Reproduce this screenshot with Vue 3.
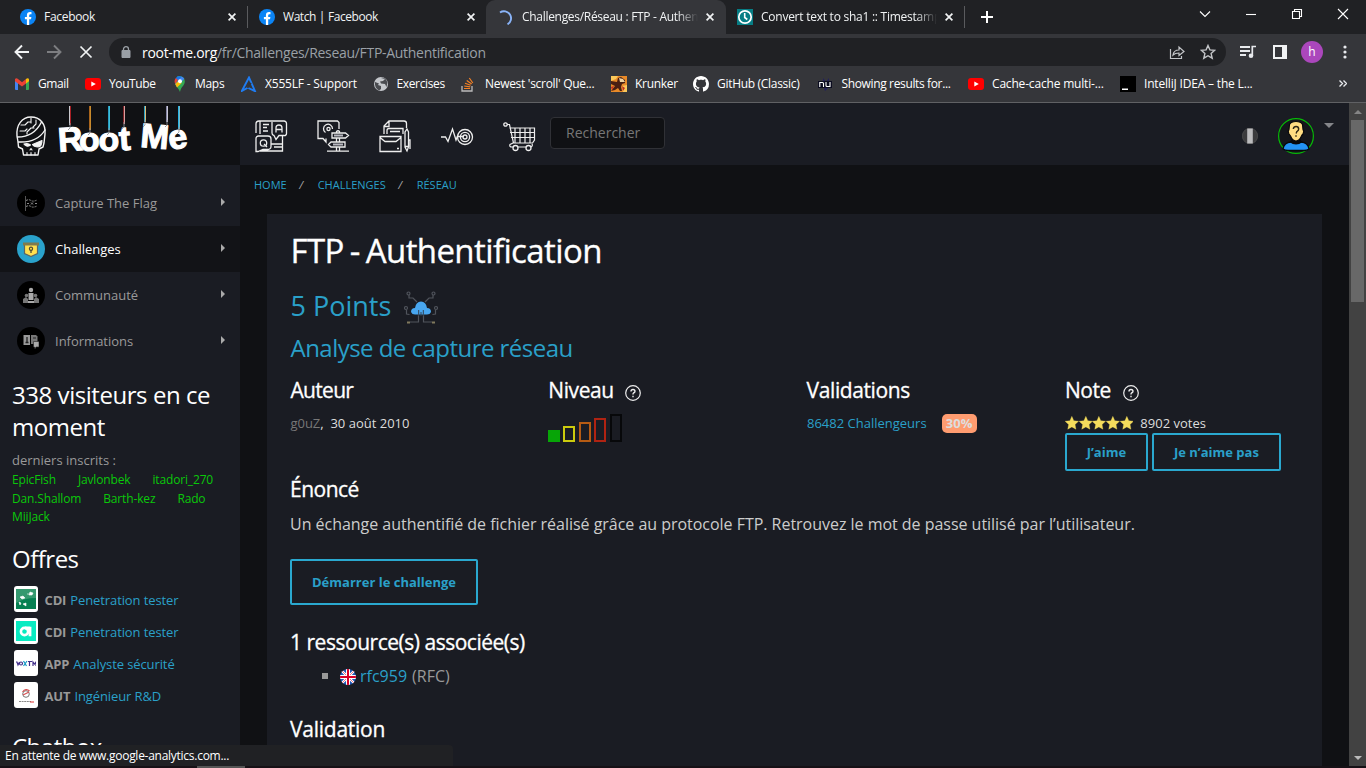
<script setup>
const tabs = [
  { id: 'fb1', title: 'Facebook', icon: 'fb' },
  { id: 'fb2', title: 'Watch | Facebook', icon: 'fb' },
  { id: 'rm', title: 'Challenges/Réseau : FTP - Authentification', icon: 'spin' },
  { id: 'sha', title: 'Convert text to sha1 :: Timestamp Converter', icon: 'clock' }
]
const bookmarks = [
  { t: 'Gmail', i: 'gmail' },
  { t: 'YouTube', i: 'yt' },
  { t: 'Maps', i: 'maps' },
  { t: 'X555LF - Support', i: 'asus' },
  { t: 'Exercises', i: 'globe' },
  { t: "Newest 'scroll' Que...", i: 'so' },
  { t: 'Krunker', i: 'krunker' },
  { t: 'GitHub (Classic)', i: 'github' },
  { t: 'Showing results for...', i: 'nu' },
  { t: 'Cache-cache multi-...', i: 'yt' },
  { t: 'IntelliJ IDEA – the L...', i: 'ij' }
]
const nav = [
  { t: 'Capture The Flag', i: 'flag' },
  { t: 'Challenges', i: 'chal', on: true },
  { t: 'Communauté', i: 'com' },
  { t: 'Informations', i: 'info' }
]
const offers = [
  { k: 'CDI', t: 'Penetration tester', i: 'bnp' },
  { k: 'CDI', t: 'Penetration tester', i: 'a' },
  { k: 'APP', t: 'Analyste sécurité', i: 'vox' },
  { k: 'AUT', t: 'Ingénieur R&D', i: 'red' }
]
const strings = [
  { x: 70, y: 22, a: '#c9c9cf', b: '#a81f24' },
  { x: 90, y: 27, a: '#a8641c', b: '#c98a2c' },
  { x: 109, y: 27, a: '#2a9cc4', b: '#3cc0d8' },
  { x: 124, y: 21, a: '#7c2226', b: '#d8a0a0' },
  { x: 145, y: 19, a: '#2aa0c4', b: '#d8b878' },
  { x: 167, y: 19, a: '#8484a4', b: '#c9c9d8' },
  { x: 179, y: 26, a: '#27b4e6', b: '#79b6c0' }
]
const star = 'M7 .2l2 4.400 4.900.6-3.600 3.300.9 4.900L7 11l-4.200 2.400.9-4.900L.1 5.200 5 4.600z'
</script>

<template>
  <div class="window">
    <div class="tabstrip">
      <div v-for="t in tabs" :key="t.id" class="tab" :class="'tab-' + t.id">
        <svg v-if="t.icon === 'fb'" class="fav" viewBox="0 0 16 16"><circle cx="8" cy="8" r="8" fill="#0b84f5" /><path d="M6.900 16V10.300H4.900V8h2V6.300c0-2.100 1.200-3.200 3.100-3.200.8 0 1.400.1 1.500.1v2h-1c-1 0-1.300.6-1.300 1.300V8h2.200l-.4 2.300H9.200V16z" fill="#fff" /></svg>
        <svg v-else-if="t.icon === 'spin'" class="fav" viewBox="0 0 16 16"><path d="M1 3.500A7 7 0 1 1 8.500 15.300" fill="none" stroke="#8ab4f8" stroke-width="1.900" /></svg>
        <svg v-else class="fav" viewBox="0 0 16 16"><path d="M0 0h16v16H0z" fill="#077d84" /><circle cx="8" cy="8" r="6.200" fill="none" stroke="#fff" stroke-width="1.700" /><path d="M7.700 4v4.500l2.600 2" fill="none" stroke="#fff" stroke-width="1.600" /></svg>
        <span class="tab-title">{{ t.title }}</span>
        <svg class="x" viewBox="0 0 8 8"><path d="M.6.6l6.800 6.800M7.400.6L.6 7.400" stroke="#f1f3f4" stroke-width="1.700" /></svg>
      </div>
      <svg class="plus" viewBox="0 0 12 12"><path d="M6 0v12M0 6h12" stroke="#fff" stroke-width="2" /></svg>
      <div class="winctl">
        <svg width="12" height="12" viewBox="0 0 12 12"><path d="M1 3.500l5 5 5-5" /></svg>
        <svg width="12" height="12" viewBox="0 0 12 12"><path d="M1 6.500h10" /></svg>
        <svg width="12" height="12" viewBox="0 0 12 12"><path d="M3.500 3.500v-2h7v7h-2M1.500 3.500h7v7h-7z" /></svg>
        <svg width="12" height="12" viewBox="0 0 12 12"><path d="M1 1l10 10M11 1L1 11" /></svg>
      </div>
    </div>

    <div class="toolbar">
      <svg class="tb-ic" viewBox="0 0 16 16"><path d="M15 8H2M8 1.500L1.500 8 8 14.500" fill="none" stroke="#f1f3f4" stroke-width="1.900" /></svg>
      <svg class="tb-ic" viewBox="0 0 16 16"><path d="M1 8h13M8 1.500L14.500 8 8 14.500" fill="none" stroke="#7d7e81" stroke-width="1.900" /></svg>
      <svg class="tb-ic" viewBox="0 0 16 16"><path d="M2.500 2.500l11 11M13.500 2.500l-11 11" fill="none" stroke="#f1f3f4" stroke-width="1.700" /></svg>
      <div class="omnibox">
        <svg width="10" height="12" viewBox="0 0 10 12"><path d="M1 4.500h8v7H1z" fill="#9aa0a6" stroke="#9aa0a6" /><path d="M2.500 5V3.200a2.500 2.500 0 0 1 5 0V5" fill="none" stroke="#9aa0a6" stroke-width="1.300" /></svg>
        <span class="url"><b>root-me.org</b>/fr/Challenges/Reseau/FTP-Authentification</span>
        <svg class="share" width="16" height="16" viewBox="0 0 16 16"><path d="M1.500 5v9.500h11V12M4 11c.5-3.500 2.500-5 6-5V3l5 4.500-5 4V9C7 9 5.500 9.500 4 11z" fill="none" stroke="#c3c5c8" stroke-width="1.200" /></svg>
        <svg width="16" height="16" viewBox="0 0 16 16"><path d="M8 1.500l1.900 4.400 4.800.4-3.600 3.200 1.100 4.700L8 11.700l-4.200 2.500 1.100-4.700L1.300 6.300l4.800-.4z" fill="none" stroke="#c3c5c8" stroke-width="1.400" /></svg>
      </div>
      <svg class="media" width="16" height="14" viewBox="0 0 16 14"><path d="M0 2h10M0 6h10M0 10h6" stroke="#e8eaed" stroke-width="1.800" /><path d="M12.300 10.500V1.500H16" fill="none" stroke="#e8eaed" stroke-width="1.700" /><circle cx="11" cy="10.800" r="2.300" fill="#e8eaed" /></svg>
      <svg class="panel" width="14" height="14" viewBox="0 0 14 14"><path d="M1 1h12v12H1z" fill="none" stroke="#f1f3f4" stroke-width="2" /><path d="M9 1h4v12H9z" fill="#f1f3f4" /></svg>
      <span class="profile">h</span>
      <svg class="dots" width="4" height="14" viewBox="0 0 4 14"><g fill="#e8eaed"><circle cx="2" cy="2" r="1.600" /><circle cx="2" cy="7" r="1.600" /><circle cx="2" cy="12" r="1.600" /></g></svg>
    </div>

    <div class="bookmarks">
      <div v-for="(b, n) in bookmarks" :key="n" class="bm">
        <svg class="fav" viewBox="0 0 16 16">
          <g v-if="b.i === 'gmail'"><path d="M1 3h3v11H2a1 1 0 0 1-1-1z" fill="#4285f4" /><path d="M12 3h3v10a1 1 0 0 1-1 1h-2z" fill="#34a853" /><path d="M1 3.200C1.500 2 3 2 4 3l4 3.200L12 3v4.500l-4 3-7-5.300z" fill="#ea4335" /><path d="M12 3c1.500-1.200 3-.7 3 1v1.300l-3 2.200z" fill="#fbbc04" /></g>
          <g v-else-if="b.i === 'yt'"><rect y="2" width="16" height="12" rx="3" fill="#f00" /><path d="M6.300 5.500v5L10.800 8z" fill="#fff" /></g>
          <g v-else-if="b.i === 'maps'"><path d="M5.500 0h2A5.300 5.300 0 0 1 12.800 5.500c0 4-3.800 5-4.800 10.500C7 12.500 4 11 3 8z" fill="#34a853" /><path d="M3.800 2A5.500 5.500 0 0 1 9.700.4L5 6z" fill="#1a73e8" /><path d="M3.800 2L6 4 3.300 8a5.500 5.500 0 0 1 .5-6z" fill="#ea4335" /><path d="M9.700.4a5.500 5.500 0 0 1 2.600 2.300L5 11 3.300 8z" fill="#4285f4" /><path d="M3.300 8l3-3 3.300 2L5 11.500z" fill="#fbbc04" /><circle cx="8" cy="5.300" r="2" fill="#fff" /></g>
          <g v-else-if="b.i === 'asus'"><path d="M8 1.500L.8 15l6-3.300L14 15.200z" fill="none" stroke="#1f7cf2" stroke-width="1.900" /><path d="M6.500 12L10 7" stroke="#35363a" stroke-width="1.500" /></g>
          <g v-else-if="b.i === 'globe'"><circle cx="8" cy="8" r="7" fill="#c4c7cb" /><path d="M2 6l4 1.500L5 9l3 1v3l-2 1.500C3 13 1.500 10 2 6zM8 2l4 1-2 2-3 .5 1 2 4 .5 1.500 3 .8-4C14 3 11 1 8 2z" fill="#4a4c50" /></g>
          <g v-else-if="b.i === 'so'"><path d="M1 10v5h10v-5" fill="none" stroke="#bcbbbb" stroke-width="1.300" /><path d="M3 12.500h6M3.200 10l6 .8M4 7.300l5.700 2M5.700 4.600l5 3.500M8.300 2l3.500 5" stroke="#f48024" stroke-width="1.200" /></g>
          <g v-else-if="b.i === 'krunker'"><path d="M0 0h16v16H0z" fill="#e88a28" /><path d="M0 0h7L5 3 0 5zM11 10l5-1v7h-4z" fill="#fbc85a" /><path d="M0 5l6 1 1-4 3-1 4 3v3l-3 1-1 3 1 4H9l-2-3-3 2-4 1 4-5-4-2z" fill="#4a1f12" /><path d="M8 2l4 1 2 3-5 0z" fill="#eed2a0" /><path d="M11 10l3 2-2 3zM0 11l3-1-2 4z" fill="#c22b20" /></g>
          <path v-else-if="b.i === 'github'" fill="#fff" d="M8 0C3.580 0 0 3.580 0 8c0 3.540 2.290 6.530 5.470 7.590.4.070.55-.17.55-.38 0-.19-.01-.82-.01-1.490-2.010.37-2.530-.49-2.690-.94-.09-.23-.48-.94-.82-1.130-.28-.15-.68-.52-.01-.53.63-.01 1.080.58 1.230.82.72 1.210 1.870.87 2.330.66.07-.52.28-.87.51-1.070-1.780-.2-3.640-.89-3.640-3.950 0-.87.31-1.590.82-2.150-.08-.2-.36-1.020.08-2.120 0 0 .67-.21 2.200.82.64-.18 1.320-.27 2-.27s1.360.09 2 .27c1.530-1.040 2.200-.82 2.200-.82.44 1.100.16 1.920.08 2.120.51.56.82 1.270.82 2.150 0 3.070-1.870 3.750-3.650 3.950.29.25.54.73.54 1.480 0 1.070-.01 1.930-.01 2.200 0 .21.15.46.55.38A8.010 8.010 0 0 0 16 8c0-4.420-3.580-8-8-8z" />
          <g v-else-if="b.i === 'nu'"><path d="M5 2l3 4 3-4v4h3v6h-4l-3 3-1-3H0V5h5z" fill="#22205c" /><path d="M0 5h14v7H0z" fill="#0b0c20" /><path d="M1.800 11V6.500h2.700q1 0 1 1V11M8 6v3.500q0 1 1 1h3V6" fill="none" stroke="#fff" stroke-width="1.100" /></g>
          <g v-else><path d="M0 0h16v16H0z" fill="#000" /><path d="M2 12.500h6V14H2z" fill="#fff" /></g>
        </svg>
        <span>{{ b.t }}</span>
      </div>
      <svg class="more" width="8" height="7" viewBox="0 0 8 7"><path d="M.5.500l3 3-3 3M4.500.500l3 3-3 3" fill="none" stroke="#e8eaed" stroke-width="1.400" /></svg>
    </div>

    <div class="page">
      <aside>
        <div class="brand">
          <svg width="240" height="62" viewBox="0 0 240 62">
            <g fill="none" stroke="#f4f4f4" stroke-width="1.100" stroke-linecap="round" stroke-linejoin="round">
              <path d="M18 39l-1-6C16 22 22 14 31 14s15 7 14 17l-1 9-1 4-4 2-1 6H23.500l-1-6-4-2z" stroke-width="1.400" />
              <path d="M17.500 34Q34 34 41.500 19M18.500 39Q37 40 45 27" stroke-width="1.400" />
              <path d="M21 22h4l3-3h3M20 28h5l2-2M31 15v5M27 31v-2l4-4h3M36 17v4l-3 3" />
              <path d="M24 41q4-1.500 6.500 1-3.500 2.500-5.500 0zM32.500 41.500l9.500-4q0 6-4 6.500-4 0-5.500-2.500z" fill="#f4f4f4" />
              <path d="M30 47l1-1.500 1 1.500M27 49.500v2.500M31 49.500v2.500M35 49.500v2.500" />
            </g>
            <g class="logo">
              <text x="58" y="48" transform="rotate(-4 69 38)">R</text>
              <text x="79" y="47.500">o</text>
              <text x="98.500" y="47.500">o</text>
              <text x="119" y="47" transform="rotate(-4 125 36)">t</text>
              <text x="140.500" y="45" transform="rotate(5 154 36)">M</text>
              <text x="168.500" y="45.500" transform="rotate(-8 178 38)">e</text>
            </g>
            <g v-for="s in strings" :key="s.x" fill="none">
              <path :d="`M${s.x - .5} 3V${s.y}`" :stroke="s.a" />
              <path :d="`M${s.x + .5} 3V${s.y}`" :stroke="s.b" />
              <path :d="`M${s.x} ${s.y - 2}v5l-2 2`" stroke="#8f9299" stroke-width=".9" />
            </g>
          </svg>
        </div>
        <nav>
          <div v-for="n in nav" :key="n.t" class="nav-row" :class="{ on: n.on }">
            <span class="disc">
              <svg width="16" height="16" viewBox="0 0 16 16">
                <g v-if="n.i === 'flag'" stroke="#8b8b8b" fill="none"><path d="M2.500 1v15" stroke="#555" /><path d="M3 5.500q3-1.500 5 0t6-.5M3 11.500q3-1.500 5 0t6-.5" stroke-dasharray="2 1" /><path d="M4 8.500h2M12 8.500h2M8 7.500l2 2M10 7.500l-2 2" /></g>
                <g v-else-if="n.i === 'chal'"><path d="M1.500 3h13v9.500L8 15.500l-6.500-3z" fill="#ffe04f" stroke="#5b6666" stroke-width="1.200" /><path d="M0 1.500h16v3H0z" fill="#7f7a4c" /><circle cx="8" cy="7.800" r="1.600" fill="none" stroke="#4a4a38" stroke-width="1.200" /><path d="M8 9v3" stroke="#4a4a38" stroke-width="1.300" /></g>
                <g v-else-if="n.i === 'com'" fill="#aaa"><circle cx="8" cy="3" r="2.200" /><path d="M5.500 6h5v7h-5z" /><g fill="#777"><circle cx="3.500" cy="8.500" r="1.800" /><circle cx="12.500" cy="8.500" r="1.800" /><path d="M0 12l3-2 2 2v4H0zM16 12l-3-2-2 2v4h5z" /></g><path d="M5 14h6v2H5z" /></g>
                <g v-else><path d="M.5 2H7v10H.5z" fill="#999" /><path d="M8 2h5l1.500 1.500V11H8z" fill="#777" /><path d="M4 4v5.500M2.500 9.500h3" stroke="#222" stroke-width="1.300" /><path d="M10.500 8.500H16V14h-3l-1 2-.5-2h-1z" fill="#aaa" stroke="#222" stroke-width=".6" /><path d="M10 5h3" fill="none" stroke="#222" /></g>
              </svg>
            </span>
            <span class="nav-t">{{ n.t }}</span>
            <i class="caret"></i>
          </div>
        </nav>
        <h4 class="visits"><span>338 visiteurs en ce</span><br>moment</h4>
        <div class="last">derniers inscrits :</div>
        <div class="names n1"><span>EpicFish</span><span>Javlonbek</span><span>itadori_270</span></div>
        <div class="names n2"><span>Dan.Shallom</span><span>Barth-kez</span><span>Rado</span></div>
        <div class="names n3"><span>MiiJack</span></div>
        <h4 class="offres">Offres</h4>
        <div v-for="(o, n) in offers" :key="n" class="offer">
          <span class="offer-ic">
            <svg width="20" height="20" viewBox="0 0 20 20">
              <g v-if="o.i === 'bnp'"><path d="M0 0h20v20H0z" fill="#078052" /><path d="M0 0h20v9Q8 9 0 14z" fill="#35996f" /><path d="M4 8l3-1 2 2-3 1zM14 3l3 1-1 2-3 0zM3 13l2 1-1 2zM7 15l3-1v3zM11 5l2 0" fill="#fff" stroke="#fff" stroke-width=".6" /></g>
              <g v-else-if="o.i === 'a'"><path d="M0 0h20v20H0z" fill="#08ebc1" /><circle cx="8.500" cy="10.500" r="3.600" fill="none" stroke="#fff" stroke-width="2.600" /><path d="M14 5.800v9.400M9 7h5" stroke="#fff" stroke-width="2.800" /></g>
              <g v-else-if="o.i === 'vox'" fill="none" stroke="#43308a" stroke-width="1.200"><path d="M0 9h1l1 3 1.500-3M12 8.500h4M13.500 9v4M17 13V9l1.500 2L20 9v4" /><circle cx="5" cy="10.500" r="1.500" /><path d="M7.500 8l3 5M11 8l-3.500 5" stroke="#1599c6" /></g>
              <g v-else fill="none"><circle cx="10" cy="9" r="3.300" stroke="#777" /><path d="M6.500 7c2-3 5-3 7-1M7 10l6-3" stroke="#d54e50" stroke-width="1.100" /><path d="M3 16.500h12" stroke="#888" stroke-width="1.200" stroke-dasharray="2 .6" /><path d="M14 17h4" stroke="#d33" /></g>
            </svg>
          </span>
          <b>{{ o.k }}</b><a>{{ o.t }}</a>
        </div>
        <h4 class="chat">Chatbox</h4>
      </aside>

      <div class="main">
        <header>
          <svg class="h-ic" viewBox="0 0 32 32"><path d="M1 13V4a3 3 0 0 1 3-3h25a2.500 2.500 0 0 1 2.500 2.500v10A2 2 0 0 1 29 15.500h-5l-3 4-2-4a2.500 2.500 0 0 1-2-2.500V2M5 1v13M1 18.500a2.500 2.500 0 0 1 2.500-2.500H13a3 3 0 0 1 3 3v7.500a3 3 0 0 1-3 3H8l-5 2H1zM5 31h22.500V16M16 24h11M19 27h8M8 4.500h6M8 7.500h4M8 11h5" /><path d="M21 12.500V8q0-3 3-3t3 3v4.500M21 9.500h6" /><circle cx="8.500" cy="23" r="3.200" /><path d="M9 24l3 3" /></svg>
          <svg class="h-ic" viewBox="0 0 32 32"><path d="M22 9V2.500L20.500 1H1v17.500h5l3 3.500v-3.500" /><path d="M8.500 12.500A4.500 4.500 0 1 1 15.500 9" /><circle cx="11.500" cy="9" r="1.600" /><path d="M19.500 13v-1.500q1.500-1.500 3 0V13M15 13h13.500l3 2.500-3 2.500H15zM28 22H14l-2.500 2.500L14 27h14zM19.500 18v4M22.500 18v4M19.500 27v4M22.500 27v4M10 31.200h22" /><path class="thick" d="M17 15.500h9M16 24.500h10" /></svg>
          <svg class="h-ic" viewBox="0 0 32 32"><path d="M5 14V6l5-5h15q2.500 0 2.500 2.500V8M5 6.500h5V1M24 14V8.500H10q-2 0-2 2V14M11 11.500h10M1 16.500h21v15H1zM1 17.500l5 4h11l5-4M18 28.500h2M28 9l1.500 3v15L28 31l-2-4V12zM26 26.500h3.500M29.500 20H31v9" /></svg>
          <svg class="h-ic" viewBox="0 0 32 32"><path d="M0 17h4.500L7 21.500 11.500 9 15 20l1.500-4M16 16.500h7" /><circle cx="24" cy="17" r="7.500" /><circle cx="24" cy="17" r="4.600" /><circle cx="24" cy="17" r="2" /></svg>
          <svg class="h-ic cart" viewBox="0 0 32 32"><path d="M4 4.500h2.500l4 18.500M6.500 8h25v12l-2 3H9.500M12 8v15M17 8v15M22 8v15M27 8v15M7 12.500h24M8 17.500h23M10 23l-3 1.500q-1 2.500 2 2.500h19q2-1 1-3" /><circle cx="2.500" cy="4.500" r="1.700" /><circle cx="12.500" cy="28" r="2.500" fill="#1a1c23" /><circle cx="25.500" cy="28" r="2.500" fill="#1a1c23" /></svg>
          <div class="search">Rechercher</div>
          <svg class="lang" width="16" height="16" viewBox="0 0 16 16"><circle cx="8" cy="8" r="7.700" fill="#3b3b3d" stroke="#555" stroke-width=".6" /><path d="M5.200.5h5.600v15H5.200z" fill="#bcbcbe" /></svg>
          <svg class="avatar" width="36" height="36" viewBox="0 0 36 36"><circle cx="18" cy="18" r="17.400" fill="#14161b" stroke="#07b907" stroke-width="1.200" /><path d="M5 31q1-6.500 8-7h10q7 .5 8 7-2 1.500-5 1.500H10q-3 0-5-1.500z" fill="#2393f4" stroke="#08090b" stroke-width="1.300" /><path d="M11.500 24q6.500 5 13 0l-3-3h-7z" fill="#08090b" /><path d="M11.500 6.500q1.500-3 6.500-3t6.500 3l.5 5q1.500 1.500 0 4.500-1 1-1.500 2-2 5-5.500 5t-5.500-5l-1.500-2q-1.500-3 0-4.500z" fill="#ffdd82" stroke="#08090b" stroke-width="1.200" /><path d="M15.300 11q.3-2.500 2.800-2.500t2.600 2.600q0 1.500-1.800 2.500l-.8 2M18 17.300v1.500" fill="none" stroke="#2d2615" stroke-width="1.400" /></svg>
          <i class="drop"></i>
        </header>
        <div class="crumbs"><a>HOME</a><em>/</em><a>CHALLENGES</a><em>/</em><a>RÉSEAU</a></div>
        <section class="card">
          <h1>FTP - Authentification</h1>
          <div class="points"><span>5 Points</span>
            <svg width="34" height="34" viewBox="0 0 34 34"><g fill="none" stroke="#50545c" stroke-width="1.200"><path d="M5 4v3h4l4 4M29 4v3h-4l-4 4M2.500 19v4l3 .5M31.500 19v4l-3 .5M14.500 21v10H6M19.500 21v10H28" /><circle cx="4.500" cy="2.500" r="1.500" /><circle cx="29.500" cy="2.500" r="1.500" /><circle cx="2" cy="17" r="1.500" /><circle cx="32" cy="17" r="1.500" /></g><path d="M3 30.500h3v2H3zM28 30.500h3v2h-3z" fill="#80795d" /><path d="M7 21q0-4 4-4 1-6.500 6-6.500t6 6.500q4 0 4 4-1 2.500-4 2.500H11q-3 0-4-2.500z" fill="#48a6ef" /><path d="M14.700 19v6M17 21v4M19.300 19v6" stroke="#34414f" stroke-width="1" /></svg>
          </div>
          <h3>Analyse de capture réseau</h3>
          <div class="stats">
            <div class="stat">
              <h4 class="s-aut">Auteur</h4>
              <p><span class="dim">g0uZ</span>,&nbsp; <span class="date">30 août 2010</span></p>
            </div>
            <div class="stat">
              <h4>Niveau <svg class="q" viewBox="0 0 16 16"><circle cx="8" cy="8" r="7.300" fill="none" stroke="#eee" stroke-width="1.200" /><path d="M6 6.500Q6 4.500 8 4.500t2 1.800Q10 7.500 8.500 8q-.5.300-.5 1.500M8 10.800v1.400" fill="none" stroke="#eee" stroke-width="1.400" /></svg></h4>
              <div class="levels"><i class="l1"></i><i class="l2"></i><i class="l3"></i><i class="l4"></i><i class="l5"></i></div>
            </div>
            <div class="stat">
              <h4>Validations</h4>
              <p><a>86482 Challengeurs</a><span class="pct">30%</span></p>
            </div>
            <div class="stat">
              <h4>Note <svg class="q" viewBox="0 0 16 16"><circle cx="8" cy="8" r="7.300" fill="none" stroke="#eee" stroke-width="1.200" /><path d="M6 6.500Q6 4.500 8 4.500t2 1.800Q10 7.500 8.500 8q-.5.300-.5 1.500M8 10.800v1.400" fill="none" stroke="#eee" stroke-width="1.400" /></svg></h4>
              <p class="votes"><svg v-for="n in 5" :key="n" width="13.700" height="14" viewBox="0 0 14 14"><path :d="star" fill="#f4dc5c" stroke="#f4dc5c" stroke-width=".3" /></svg><span>8902 votes</span></p>
              <div class="likes"><button class="b1">J’aime</button><button class="b2">Je n’aime pas</button></div>
            </div>
          </div>
          <h4 class="sec">Énoncé</h4>
          <p class="desc">Un échange authentifié de fichier réalisé grâce au protocole FTP. Retrouvez le mot de passe utilisé par l’utilisateur.</p>
          <button class="start">Démarrer le challenge</button>
          <h4 class="sec res">1 ressource(s) associée(s)</h4>
          <div class="rfc"><i></i>
            <svg width="16" height="16" viewBox="0 0 16 16"><defs><clipPath id="disc"><circle cx="8" cy="8" r="8" /></clipPath></defs><g clip-path="url(#disc)"><path d="M0 0h16v16H0z" fill="#1e58b5" /><path d="M0 0l16 16M16 0L0 16" stroke="#fff" stroke-width="2.400" /><path d="M0 0l16 16M16 0L0 16" stroke="#e0506a" stroke-width=".8" /><path d="M8 0v16M0 8h16" stroke="#fff" stroke-width="4" /><path d="M8 0v16M0 8h16" stroke="#d80027" stroke-width="2" /></g></svg>
            <a>rfc959</a><span>(RFC)</span></div>
          <h4 class="sec val">Validation</h4>
        </section>
      </div>

      <div class="scroll"><i class="up"></i><div class="thumb"></div><i class="down"></i></div>
    </div>
    <div class="bottom"><i></i></div>
    <div class="status">En attente de www.google-analytics.com...</div>
  </div>
</template>

<style>
body { background: #101114; overflow: hidden; }
</style>

<style scoped>
* { box-sizing: border-box; }
.window { width: 1366px; height: 768px; position: relative; overflow: hidden; display: flex; flex-direction: column; font-family: "Open Sans", "Noto Sans", sans-serif; background: #101114; color: #fff; }
svg { display: block; flex: none; }
h1, h3, h4, p { margin: 0; font-weight: 400; }
a { color: #2aa0c9; }
.tabstrip { height: 34px; background: #202124; display: flex; align-items: stretch; flex: none; }
.tab { display: flex; align-items: center; white-space: nowrap; font-size: 12px; color: #f1f3f4; padding-left: 20px; flex: none; }
.fav { width: 16px; height: 16px; }
.tab-title { flex: 1; overflow: hidden; margin-left: 8px; letter-spacing: -.3px; line-height: 34px; }
.tab .x { width: 8px; height: 8px; margin: 0 11px 0 8px; }
.tab-fb1 { width: 248px; border-image: linear-gradient(#202124 7px, #5a5b5e 7px, #5a5b5e 27px, #202124 27px) 1; border-right: 1px solid; }
.tab-fb2 { width: 238px; padding-left: 11px; }
.tab-fb2 .tab-title { letter-spacing: -.45px; word-spacing: .3px; }
.tab-rm { width: 240px; padding-left: 13px; background: #35363a; border-radius: 9px 9px 0 0; }
.tab-rm .x { margin-right: 12px; }
.tab-rm .tab-title { margin-left: 7px; }
.tab-rm .tab-title, .tab-sha .tab-title { -webkit-mask-image: linear-gradient(90deg, #000 88%, transparent); mask-image: linear-gradient(90deg, #000 88%, transparent); }
.tab-sha { width: 239px; padding-left: 11px; border-image: linear-gradient(#202124 7px, #5a5b5e 7px, #5a5b5e 27px, #202124 27px) 1; border-right: 1px solid; }
.tab-sha .tab-title { letter-spacing: -.25px; }
.plus { width: 12px; height: 12px; margin: 11px 0 0 16px; }
.winctl { margin: 8px 17px 0 auto; display: flex; gap: 34px; }
.winctl path { fill: none; stroke: #fff; stroke-width: 1.100; }
.toolbar { height: 36px; background: #35363a; display: flex; align-items: center; padding-left: 14px; flex: none; }
.tb-ic { width: 16px; height: 16px; margin-right: 16px; }
.omnibox { width: 1117px; height: 28px; background: #202124; border-radius: 14px; margin-left: -1px; display: flex; align-items: center; padding-left: 12px; font-size: 14px; }
.url { margin-left: 11px; color: #9aa0a6; letter-spacing: -.3px; white-space: nowrap; }
.url b { font-weight: 400; color: #fff; }
.share { margin: 0 15px 0 auto; }
.omnibox svg:last-child { margin-right: 10px; }
.media { margin-left: 14px; }
.panel { margin-left: 17px; }
.profile { width: 22px; height: 22px; border-radius: 50%; background: #ab47bc; font-size: 12px; line-height: 21px; text-align: center; margin-left: 14px; }
.dots { margin-left: 20px; }
.bookmarks { height: 33px; background: #35363a; border-bottom: 1px solid #606164; display: grid; grid-template-columns: 71px 87px 69px 132px 88px 150px 82px 125px 150px 152px 219px 8px; padding: 0 0 5px 14px; align-items: center; font-size: 12px; flex: none; }
.bm { display: flex; align-items: center; gap: 8px; white-space: nowrap; letter-spacing: -.3px; }
.bm:nth-child(1) { letter-spacing: -.4px; }
.bm:nth-child(2) { letter-spacing: -.4px; }
.bm:nth-child(3) { gap: 7px; }
.bm:nth-child(4) { letter-spacing: -.2px; }
.bm:nth-child(5), .bm:nth-child(9) { letter-spacing: -.36px; gap: 7.500px; }
.bm:nth-child(10), .bm:nth-child(11) { letter-spacing: -.18px; }
.page { flex: 1; min-height: 0; display: flex; overflow: hidden; }
aside { width: 240px; background: #1a1c23; flex: none; overflow: hidden; }
.brand { height: 62px; background: #101114; }
.logo text { font: bold 34px "Liberation Sans", Arial, sans-serif; fill: #fff; stroke: #fff; stroke-width: 1.100; }
nav { padding-top: 15px; }
.nav-row { height: 46px; padding: 0 15px 0 17px; display: flex; align-items: center; font-size: 13px; color: #9a9a9a; }
.nav-row.on { background: #121317; color: #fff; }
.disc { width: 28px; height: 28px; border-radius: 50%; background: #000; display: grid; place-items: center; margin-right: 10px; }
.on .disc { background: #2aa2cb; }
.caret { margin-left: auto; border-left: 4px solid #aaa; border-top: 4px solid transparent; border-bottom: 4px solid transparent; margin-bottom: 2px; }
.visits { margin: 15px 0 0 12px; font-size: 24px; line-height: 32px; white-space: nowrap; letter-spacing: -.45px; }
.last { margin: 7px 0 0 12px; font-size: 13px; line-height: 20px; color: #999; }
.names { display: flex; margin-left: 12px; font-size: 12px; line-height: 18.500px; color: #0ac80a; gap: 22px; white-space: nowrap; letter-spacing: -.15px; position: relative; top: 1px; }
.offres { margin: 16px 0 0 12px; font-size: 24px; line-height: 34px; height: 42px; letter-spacing: -.5px; }
.offer { height: 32px; padding-left: 14px; display: flex; align-items: center; font-size: 13px; white-space: nowrap; letter-spacing: -.1px; }
.offer-ic { width: 24px; height: 26px; background: #fff; border-radius: 3px; padding: 3px 2px; margin: -2px 6.500px 0 0; }
.offer b { color: #999; margin-right: 4px; letter-spacing: -.15px; }
.chat { margin: 18px 0 0 12px; font-size: 24px; line-height: 34px; letter-spacing: -.5px; }
.main { width: 1109px; flex: none; overflow: hidden; }
header { height: 62px; background: #1a1c23; display: flex; align-items: center; padding-left: 15px; }
.h-ic { width: 32px; height: 32px; margin: 3px 30px 0 0; overflow: visible; }
.h-ic path, .h-ic circle { stroke: #eee; stroke-width: 1.300; }
.h-ic .thick { stroke: #b8b8c0; stroke-width: 2; }
.h-ic path { fill: none; }
.h-ic circle:not([fill]) { fill: none; }
.cart { margin: 3px 15px 0 0; }
.cart path { stroke-width: 1.200; }
.search { width: 115px; height: 32px; border: 1px solid #303136; background: #101114; border-radius: 4px; color: #777; font-size: 14px; line-height: 30px; padding-left: 15px; margin-top: -2px; }
.lang { margin-left: auto; margin-top: 3px; }
.avatar { margin: 3px 10px 0 20px; }
.drop { border-top: 5px solid #85868a; border-left: 5px solid transparent; border-right: 5px solid transparent; margin: -17px 15px 0 0; }
.crumbs { height: 49px; padding: 10px 0 0 14px; display: flex; font-size: 11px; line-height: 20px; }
.crumbs em { width: 31px; padding-left: 12.500px; color: #aaa; }
.card { background: #1a1c23; margin-left: 27px; width: 1055px; height: 560px; padding: 15px 23px 0; }
h1, .stat h4, .sec { -webkit-text-stroke: .3px #fff; }
h1 { font-size: 33px; line-height: 44px; letter-spacing: -.6px; word-spacing: -2px; height: 47px; padding-left: .5px; }
.points { height: 60px; display: flex; align-items: center; font-size: 27px; line-height: 58px; padding: 0 0 1px .5px; color: #2aa0c9; gap: 13px; }
.points svg { margin-top: 4px; }
h3 { font-size: 24px; line-height: 32px; color: #2aa0c9; height: 42px; margin-top: -4px; letter-spacing: -.53px; padding-left: .5px; }
.stats { display: grid; grid-template-columns: repeat(4, 258.300px); height: 99px; }
.stat h4 { font-size: 21px; line-height: 32px; display: flex; align-items: center; letter-spacing: -.4px; }
.stat .s-aut { letter-spacing: -.7px; padding-left: .5px; }
.stat p { font-size: 13px; line-height: 20px; margin-top: 6.500px; height: 22px; color: #ddd; white-space: nowrap; padding-left: .4px; }
.q { width: 16px; height: 16px; margin: 5px 0 0 11.500px; }
.q path, .q circle { -webkit-text-stroke: 0; }
.dim { color: #777; }
.levels { display: flex; align-items: flex-end; gap: 3.500px; height: 30px; margin: 6px 0 0 -.5px; }
.levels i { width: 12px; border: 2px solid; }
.levels .l1 { height: 12px; background: #07a507; border-color: #07a507; }
.levels .l2 { height: 16px; border-color: #cccb0d; }
.levels .l3 { height: 20px; border-color: #b65b13; }
.levels .l4 { height: 24px; border-color: #b02312; }
.levels .l5 { height: 28px; border-color: #07080a; }
.pct { display: inline-block; background: #ff9c70; color: #ddd; font-weight: 700; border-radius: 5px; margin-left: 15px; width: 35px; text-align: center; line-height: 19px; }
.stat .votes { display: flex; align-items: center; height: 20.500px; padding: 0; }
.votes span { margin-left: 7px; }
button { font: 700 13px "Open Sans", sans-serif; background: transparent; color: #2aa0c9; border: 2px solid #2aa8cf; border-radius: 2px; padding: 0; white-space: nowrap; }
.likes { display: flex; gap: 4px; }
.likes button { height: 38px; }
.b1 { width: 83px; }
.b2 { width: 129px; }
.sec { font-size: 21px; line-height: 32px; white-space: nowrap; letter-spacing: -.5px; }
.res { letter-spacing: -.48px; }
.val { letter-spacing: -.25px; }
.desc { font-size: 16px; line-height: 24px; color: #ccc; margin-top: 7px; white-space: nowrap; letter-spacing: -.026px; }
.start { display: block; width: 188px; height: 46px; margin: 23px 0 21px; }
.rfc { height: 32px; display: flex; align-items: center; font-size: 16px; padding-left: 32px; margin-top: 2px; }
.rfc i { width: 6px; height: 6px; background: #999; margin-right: 12px; }
.rfc svg { margin-top: 2px; }
.rfc a { margin: 0 5px 0 4px; }
.rfc span { color: #999; }
.val { margin-top: 21px; }
.scroll { width: 17px; background: #424242; flex: none; display: flex; flex-direction: column; align-items: center; }
.up, .down { border-left: 4px solid transparent; border-right: 4px solid transparent; }
.up { border-bottom: 4px solid #858585; margin: 7px 0 6px; }
.thumb { width: 13px; height: 182px; background: #686868; }
.down { border-top: 4px solid #bbb; margin: auto 0 6px; }
.bottom { height: 2px; background: #161116; flex: none; padding-left: 197px; }
.bottom i { display: block; width: 48px; height: 2px; background: #555; }
.status { position: absolute; left: 0; bottom: 2px; width: 453px; height: 21px; background: #202124; border-radius: 0 4px 0 0; font-size: 12px; line-height: 21px; padding-left: 5px; letter-spacing: -.27px; }
</style>
